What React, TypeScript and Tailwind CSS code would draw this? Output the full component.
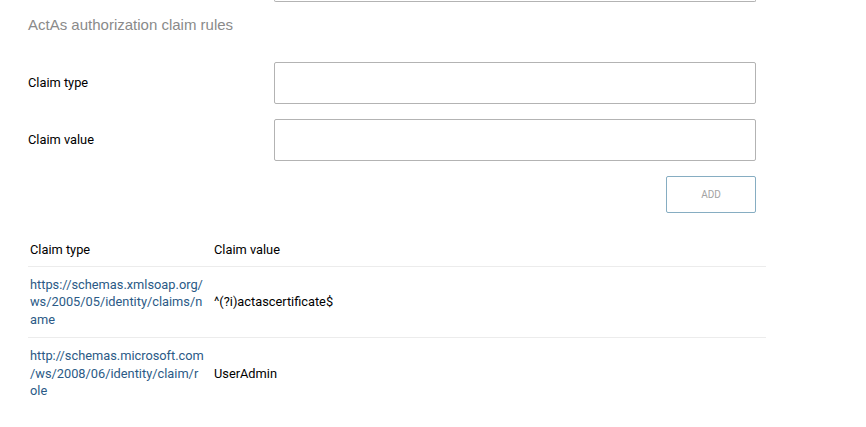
// claim type URIs are shown wrapped the same way the source table wraps them
const rules = [
  {
    type: ["https://schemas.xmlsoap.org/", "ws/2005/05/identity/claims/n", "ame"],
    value: "^(?i)actascertificate$",
  },
  {
    type: ["http://schemas.microsoft.com", "/ws/2008/06/identity/claim/r", "ole"],
    value: "UserAdmin",
  },
];

function Field({ label }: { label: string }) {
  return (
    <div className="flex items-center">
      <label className="w-[246px] shrink-0 text-[12.8px] text-black">{label}</label>
      <input
        type="text"
        className="h-[42px] w-[482px] rounded-[2px] border border-[#b3b3b3] bg-white px-3 text-[13px] outline-none"
      />
    </div>
  );
}

export default function App() {
  return (
    <div className="min-h-[427px] bg-white font-['Roboto',sans-serif] text-black">
      <div className="ml-[274px] h-[2px] w-[482px] rounded-b-[2px] border-x border-b border-[#b3b3b3]" />

      <div className="px-[28px]">
        <h2 className="mt-[13px] font-['Liberation_Sans',Arial,sans-serif] text-[15px] leading-[19px] text-[#8a8a8a]">
          ActAs authorization claim rules
        </h2>

        <div className="mt-[28px] flex flex-col gap-[15px]">
          <Field label="Claim type" />
          <Field label="Claim value" />
        </div>

        <div className="mt-[15px] flex w-[728px] justify-end">
          <button className="h-[37px] w-[90px] rounded-[2px] border border-[#86adc2] bg-white text-[10px] text-[#a3a3a3]">
            ADD
          </button>
        </div>

        <table className="mt-[21px] w-[738px] table-fixed border-collapse text-[12.8px]">
          <thead>
            <tr className="border-b border-[#ececec]">
              <th className="h-[32px] w-[184px] pl-[2px] pr-[1px] text-left font-normal">Claim type</th>
              <th className="h-[32px] pl-[2px] text-left font-normal">Claim value</th>
            </tr>
          </thead>
          <tbody>
            {rules.map((r) => (
              <tr key={r.value} className="border-b border-[#ececec] last:border-b-0">
                <td className="whitespace-nowrap py-[9px] pl-[2px] pr-[1px] align-middle leading-[17.5px] text-[#2b5a86]">
                  {r.type.map((line) => (
                    <span key={line} className="block">
                      {line}
                    </span>
                  ))}
                </td>
                <td className="py-[9px] pl-[2px] align-middle leading-[17.5px]">{r.value}</td>
              </tr>
            ))}
          </tbody>
        </table>
      </div>
    </div>
  );
}
